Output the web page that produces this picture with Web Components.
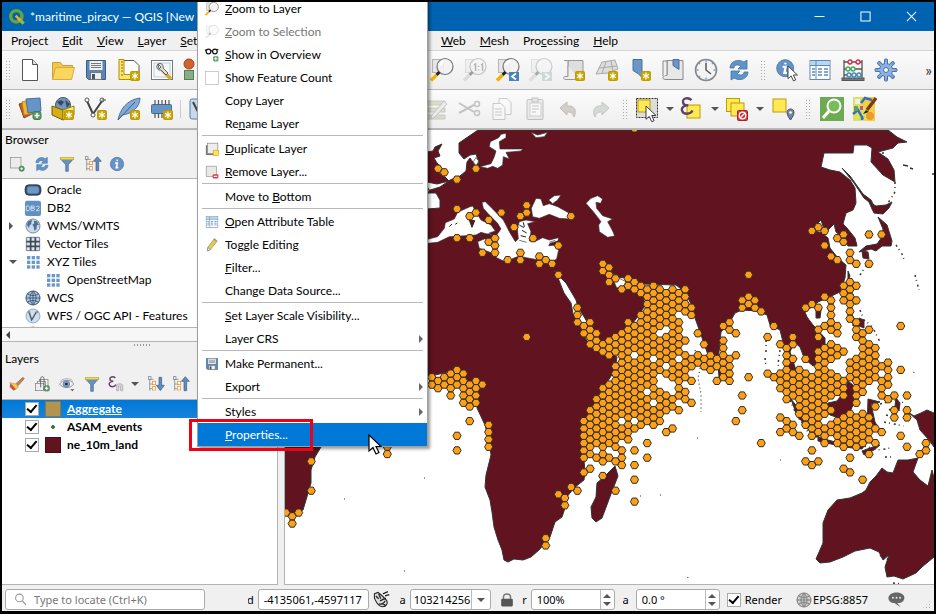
<!DOCTYPE html>
<html lang="en">
<head>
<meta charset="utf-8">
<title>maritime_piracy — QGIS</title>
<style>
html,body{height:100%;margin:0;background:#000}
body{font:12px/18px Lato,"Open Sans",sans-serif;color:#000}
</style>
</head>
<body>
<qgis-window></qgis-window>
<script>
const rect=(x,y,w,h,f,s='none',r=0)=>`<rect x="${x}" y="${y}" width="${w}" height="${h}" rx="${r}" fill="${f}" stroke="${s}"/>`;
const path=(d,f='none',s='none',w=1,x='')=>`<path d="${d}" fill="${f}" stroke="${s}" stroke-width="${w}" ${x}/>`;
const circ=(x,y,r,f='none',s='none',w=1)=>`<circle cx="${x}" cy="${y}" r="${r}" fill="${f}" stroke="${s}" stroke-width="${w}"/>`;
const star=rect(13.5,13.5,9,9,'#c9a500','#c09a00',1)+path('M18 14.5v7M15 16.2l6 3.6M15 19.8l6-3.6','none','#fff',1.2);
const plusBadge=rect(15,14.5,8,8,'#5b9a68','#3f7f50',2)+path('M19 16v5M16.500 18.500h5','none','#fff',1.500);
const lens=(handle='#f0b400')=>rect(2.500,1.500,11,13,'#e6e6e6','#b5b5b5')+circ(15,8.500,8,'#f2f2f2dd','#777',1.200)+path('M10 7a5 5 0 0 1 4-3.500','none','#fff',1.800)+path('M9.500 14L6.500 17','none','#222',3)+path('M6.500 17L1 22.500','none',handle,3.400);
const globe=(f,l)=>circ(12,12,10.500,f,l,1.500)+path('M2 12h20M12 2v20M12 2c-6 5-6 15 0 20M12 2c6 5 6 15 0 20M4 6c5 3 11 3 16 0M4 18c5-3 11-3 16 0','none',l,1.300);
const land=path('M4 6c3-3 6-3 7-2l-2 3 1 2-3 2-1 4-3-4zM13 4l5 1 3 5-3 1-1 6-3 2-1-6-2-3 3-2z','#54708c');
const floppy=path('M2.500 2.500h19v19H4.500l-2-2z','#5b87b8','#3c5d82')+rect(5.5,3,13,9,'#f0f0f0')+path('M7 5.500h10M7 7.500h10M7 9.500h10','none','#777')+rect(6.5,14.5,11,7,'#eee','#777')+rect(8,16,3,5,'#456');
const refresh=path('M3 10C3 4 10 0 17 4l3-2v9h-9l3-3C10 6 7 7 7 10z','#5e93cb','#44739f',.8)+path('M21 14c0 6-7 10-14 6l-3 2v-9h9l-3 3c4 2 7 1 7-2z','#5e93cb','#44739f',.8);
const funnel=path('M2 4h20l-8 9v10h-4V13z','#6592c4','#48678c')+rect(2,2,20,3.500,'#f0dc4b','#b9a94a');
const info=circ(12,12,10,'#6693c5','#4a739f')+path('M12.500 5.500l-.5 2M9 10.500h3.500L11 17.500h3','none','#fff',2.500);
const pointer=path('M0 0v14l3.500-3 2.500 5.500 2.500-1-2.500-5.500h4.500z','#fff','#333',1);
const yellow=(x,y,s)=>rect(x,y,s,s,'#ffe955','#c09a00');
const tree=path('M4 2v20M4 5h6M4 12h6M4 19h6','none','#777')+rect(2,1,4,4,'#eee','#777')+rect(8,8,5,5,'#fff','#e58a1f')+rect(8,16,5,5,'#fff','#e58a1f');
const eps=(x,y,s)=>`<g transform="translate(${x} ${y}) scale(${s})">`+path('M10 2C7-1 1 0 2 4c0 2 2 3 5 3C3 7 0 9 1 12c1 4 8 4 10 0','none','#634068',2.2)+'</g>';
const dots=(c,z=5)=>[3,10,17].map(x=>[3,10,17].map(y=>rect(x,y,z,z,c)).join('')).join('');
const page=path('M4.500 1.500h10l5 5v16h-15z','#fff','#555')+path('M14.500 1.500v5h5','#ddd','#555');
const ICONS={
 qgis:circ(11,11,8.500,'none','#67a637',5)+path('M14 14l8 8','none','#8fbd3d',5)+path('M10 10l7 7','none','#f0a830',3.500),
 new:page,
 open:path('M1.500 21.500V4.500h8l2 3h10v4','#f3c74a','#c79f35')+path('M1.500 21.500l3-12h19l-3 12z','#fbd65f','#d7ab3c'),
 save:floppy,
 layout:path('M5 2.500h12l5 5v14H5z','#fff','#555')+path('M2 1.500h5v15h7v5H2z','#ffe46a','#b28e00')+path('M4 4h2M4 7h2M4 10h2M4 13h2M4 17h2','none','#8a6d00')+star,
 tools:rect(1.5,2.500,21,19,'#fff','#777')+rect(4,5,16,14,'#f6f8fc','#bbccdd')+path('M12 12L21 21','none','#d9a92b',3.500)+path('M8 6c-3 3 0 7 3 6l5 5 2-2-5-5c1-3-2-6-5-4l3 3-2 2z','#ddd','#555',.9),
 style:circ(6,6,5,'#d2622c','#a04218')+rect(1.500,12.500,9,9,'#89ad89','#50805a')+path('M15 7l6 3','none','#48739f',2),
 zoomLayer:lens(),
 zoomSel:`<g opacity=".3">${lens('#bbb')}</g>`,
 zoom11:`<g opacity=".4">${lens('#bbb')}${path('M11 7l1.500-1v7M18 7l1.500-1v7M15.500 8v1M15.500 11.500v1','none','#555',1.500)}</g>`,
 zoomLast:lens()+rect(13,14,10,9,'#4c82ba')+path('M20 15.500l-4 3 4 3','none','#fff',1.800),
 zoomNext:`<g opacity=".35">${lens('#bbb')}${rect(13,14,10,9,'#8aa')}${path('M16 15.500l4 3-4 3','none','#fff',1.800)}</g>`,
 mapNew:path('M6 2.500h15v16H6z','#dedede','#999')+path('M2 2.500h4v16H3c-2 0-2 3 1 3h13','#eee','#999')+star,
 mesh:path('M1 16L7 4l13-2 3 9-10 4z','#ddd','#aaa')+path('M4 10l18-2M11 4l-4 11M16 3l2 10','none','#aaa')+star,
 bookNew:path('M5 1.500h9v18l-4-4-5-3z','#6b97c8','#48709c')+star,
 book:path('M6 2.500h16v19H5c-4 0-4-3-1-4h2z','#e8e8e8','#888')+path('M2 18V3h4v14','#f0f0f0','#888')+path('M12 1.500h6v10l-3-2-3-2z','#6b97c8','#48709c'),
 clock:circ(12,12,10.500,'#f4f4f4','#888',1.600)+path('M12 5v7l5 4','none','#555',1.500)+path('M12 2.500v2M12 19.500v2M2.500 12h2M19.500 12h2M5 5l1 1M18 5l1 1M5 19l1-1','none','#6b97c8',1.300),
 refresh,
 identify:`<g transform="scale(.85)">${info}</g><g transform="translate(13 8) scale(.9)">${pointer}</g>`,
 table:rect(2,2.500,20,19,'#fff','#5d88b8')+rect(2.500,3,19,4,'#b9d8f0')+path('M2 7.500h20M8 3v18','none','#5d88b8')+path('M4 11h3M4 14h3M4 17h3M10 11h4M10 14h4M10 17h4M16 11h4M16 14h4M16 17h4','none','#5d88b8',1.400),
 abacus:path('M3 2v19M21 2v19M3 4h18M3 11h18M3 17h18','none','#555',1.300)+rect(1,20,22,2.500,'#777','#555')+circ(9,4,2,'#fff','#d24',1.300)+circ(17,4,2,'#fff','#d24',1.300)+circ(7,11,2,'#dfd','#4a5',1.300)+circ(12,11,2,'#dfd','#4a5',1.300)+circ(8,17,2,'#def','#48b',1.300)+circ(13,17,2,'#def','#48b',1.300)+circ(18,17,2,'#def','#48b',1.300),
 gear:[0,45,90,135].map(a=>`<rect x="10.500" y="1" width="3" height="22" rx="1" fill="#7ea6d8" stroke="#4773ab" transform="rotate(${a} 12 12)"/>`).join('')+circ(12,12,6.500,'#8fb2de','#4773ab')+[0,45,90,135].map(a=>`<rect x="11" y="4" width="2" height="16" fill="#8fb2de" transform="rotate(${a} 12 12)"/>`).join('')+circ(12,12,2.500,'#f5f5f5','#4773ab'),
 dataSource:path('M1 7l12-3 3 12-10 5z','#c85a28','#9a3d15')+path('M4 5l12-3 2 14-12 2z','#eeb530','#ba8614')+path('M8 2l14-1 1 13-13 2z','#6694c6','#486f9c')+plusBadge,
 geopackage:circ(12,8,7.500,'#7195bb','#456')+path('M6 5l4-2 3 2-3 4zM14 3l5 4-3 4z','#33495f')+path('M1 9l11 4v10L1 18z','#d7ad18','#775d00')+path('M12 13l11-4v9l-11 5z','#ffef5d','#927a10')+star,
 vector:path('M3 4l6 13L18 4','none','#444',2)+circ(3,3,2,'#fff','#555')+circ(9,18,2,'#fff','#555')+path('M18 3h4M16 3a2 2 0 1 0 4 0 2 2 0 0 0-4 0','none','#555')+star,
 feather:path('M1 23C3 13 9 3 23 1c0 9-8 16-18 17z','#83aad6','#4d7196')+path('M1 23L18 5','none','#3c6086')+star,
 chip:rect(1.500,7.500,20,9,'#6794c7','#48709c',1)+path('M5 3v5M8.500 3v5M12 3v5M15.500 3v5M19 3v5M5 16v5M8.500 16v5M12 16v5M15.500 16v5','none','#555',1.200)+star,
 virtual:rect(2,2,20,20,'#c9d9ea','#5580ae',2)+path('M5 5l6 12 7-12','none','#345',2),
 edits:`<g opacity=".45">${path('M1 4h20v4H1zM1 11h20v4H1zM1 18h20v4H1z','#b9c38c','#999')}${path('M8 18L20 4l3 3L11 20l-4 2z','#ddd','#888')}</g>`,
 cut:path('M2 6l15 9M2 16L17 8','none','#c4c4c4',2)+circ(20,7,2.500,'none','#c4c4c4',1.500)+circ(20,16,2.500,'none','#c4c4c4',1.500),
 copy:`<g opacity=".35">${path('M9 1.500h8l4 4v12H9z','#fff','#777')}${path('M3 6.500h8l4 4v12H3z','#fff','#777')}${path('M5 12h7M5 15h7M5 18h7','none','#777')}</g>`,
 paste:`<g opacity=".4">${rect(4,2.500,16,20,'#ddd','#777',1)}${rect(7,6,11,13,'#fff','#999')}${rect(9,1,6,4,'#ccc','#777')}${path('M9 9h7M9 12h7M9 15h4','none','#777')}</g>`,
 undo:path('M4 11l7-6v4c8-1 10 5 7 11-1-4-3-5-7-5v3z','#d4cdc8','#c2bcb8'),
 redo:path('M20 11l-7-6v4C5 8 3 14 6 20c1-4 3-5 7-5v3z','#d6dad6','#c2c6c2'),
 select:`<rect x="1.500" y="1.500" width="21" height="19" fill="#ddd" stroke="#333" stroke-dasharray="2 1"/>`+yellow(3,3,12)+`<g transform="translate(11 9) scale(.95)">${pointer}</g>`,
 selExpr:yellow(7,8,13)+eps(1,1,1.050),
 deselect:yellow(1.500,1.500,13)+yellow(6,6,13)+rect(12.500,13.500,10,10,'#d8353c','#b02028',1)+circ(17.500,18.500,3.300,'none','#fff',1.300)+path('M15 21l5-5','none','#fff',1.300),
 selLoc:yellow(1,2,13)+path('M18.500 23c-6-8-3-11 0-11s6 3 0 11z','#6d8ba0','#547')+circ(18.500,15.500,1.300,'#fff'),
 osmFind:rect(0,0,24,24,'#6cab4f')+circ(14,9,6.500,'#78bd5a','#fff',2)+path('M9 14l-6 7','none','#fff',3),
 osmEdit:rect(0,0,22,24,'#f4cf45')+path('M0 0h9v8l5 5v11H0z','#dfe05e')+path('M0 17l5-4 5 9M8 6l4-5 7 2M9 23v-4','none','#3671bf',2.500)+rect(1,9,4,5,'#67a35d')+rect(7,9,3,4,'#c45c6b')+rect(2,2,5,5,'#e8f0f5')+path('M14 13L23 1','none','#7c3c16',3.500)+path('M10 17l3-4 3 2z','#222')+circ(17,19,4,'#f09a2c'),
 addLayer:rect(2,2,16,16,'#ececec','#888')+circ(19,19,4,'#5b9a68','#3f7f50')+path('M19 17v4M17 19h4','none','#fff',1.200),
 filter:funnel,
 collapse:tree+path('M18 22V8h-4l6-7 6 7h-4v14z','#5d8cbf','#3d5c80'),
 expand:tree+path('M18 2v12h-4l6 8 6-8h-4V2z','#5d8cbf','#3d5c80'),
 info,
 oracle:rect(0,4,24,16,'#34495e','#2b3c4d',6)+rect(3,6.500,18,11,'#6c98c8','#54779f',4),
 db2:rect(0,1,24,23,'#6390c2','none',3)+`<g stroke="#d8e6f4" fill="none" stroke-width="1.300"><path d="M2 9h3c3 0 3 7 0 7H2zM9 9h3c3 0 3 3 0 3H9zM9 12h3c3 0 3 4 0 4H9zM17 10c2-2 6 0 4 2l-4 4h5"/></g>`,
 wms:circ(12,12,10.500,'#c9dcef','#607e9b',1.300)+land,
 vtiles:rect(2,2,20,20,'#dde3ea','#3c4a58',1)+path('M2 8.500h20M2 15.500h20M8.500 2v20M15.500 2v20','none','#3c4a58',2.500),
 xyz:dots('#6b97c8'),
 wcs:globe('#a9c7e4','#3b526b'),
 wfs:circ(12,12,10.500,'#cfdeed','#6b8cab')+path('M6 6l4 12 7-12','none','#456',2)+circ(6,6,1.500,'#fff','#456')+circ(18,6,1.500,'#fff','#456'),
 brush:path('M10 12l3 3L23 4l-2-2z','#c98a3c','#855')+path('M1 10l10 2 3 5-5 4z','#f1cd42','#b97')+path('M2 11l8 8-3 3-6-6z','#d24e43'),
 group:rect(8,5,13,13,'#f4f4f4','#777')+rect(5,8,12,12,'#f4f4f4','#777')+rect(2,11,12,11,'#eee','#777')+path('M10 17V4c0-4 5-4 5 0v10','none','#555',1.300)+plusBadge,
 eye:path('M1 12C5 5 18 4 22 12c-4 7-17 7-21 0z','#f4f4f4','#888',1.300)+circ(11,12,5,'#7ba2cf','#53779f')+circ(11,12,2,'#222')+path('M2 8c4-5 14-6 19 0','none','#999')+path('M17 20h6l-3 3z','#555'),
 epsF:eps(1,1,1)+path('M13 22v-8c0-3 9-3 9 0v8h-3v-7h-3v7z','#ddd','#999'),
 overview:circ(6,6,4,'none','#111',2)+circ(17,6,4,'none','#111',2)+path('M0 4l3-1M20 3l3 0M10 5h3','none','#111',2)+rect(14,14,9,9,'#5b9a68','none',2)+path('M18.500 15.500v6M15.500 18.500h6','none','#fff',1.500),
 box:rect(1,1,22,22,'#fff','#aaa'),
 dup:rect(1.500,5.500,17,17,'#777')+rect(4,2,18,18,'#eee','#777')+rect(14,14,9,9,'#ffe25a','#c7a000'),
 remove:rect(2,2,18,18,'#e9e9e6','#888')+rect(13,16,10,7,'#e33b43','none',2)+path('M15 19.500h6','none','#fff',2),
 pencil:path('M4 22l1-6L16 1l5 4L9 20z','#e4cf3e','#777')+path('M4 22l1-6 4 4z','#eee','#777')+path('M15 2l5 4','none','#999',2),
 search:circ(10,9,7,'none','#999',2)+path('M15 14l7 8','none','#999',2.500),
 mouse:path('M2 4l5-2 5 4 6 6c5 5 0 11-6 10S4 14 2 10z','#ddd','#222',1.500)+path('M4 7l4 4M8 4l3 7M10 14l8-4M8 18c4 2 8-1 9-4M14 18l4 3M14 4l7-3M17 7l6-2','none','#222',1.800),
 lock:path('M6 11V7c0-7 12-7 12 0v4','none','#777',2.500)+rect(2,10,20,13,'#555','none',2),
 globe:globe('#ccc','#777'),
 message:path('M12 2c15 0 14 15 2 15h-1l5 6-9-6C-3 16-2 2 12 2z','#666')+circ(7,9.500,1.300,'#eee')+circ(12,9.500,1.300,'#eee')+circ(17,9.500,1.300,'#eee'),
 min:path('M1 12h22','none','#fff',2),max:path('M2 2h20v20H2z','none','#fff',2.200),close:path('M2 2l20 20M22 2L2 22','none','#fff',2.200)
};
function define(tag,css,html){
 customElements.define(tag,class extends HTMLElement{
  connectedCallback(){
   if(this.shadowRoot)return;
   const r=this.attachShadow({mode:'open'});
   r.innerHTML=`<style>:host,*{box-sizing:border-box}button,input,select{font:inherit;color:inherit}button{border:0;background:none;padding:0}${css}</style>`+(typeof html==='function'?html(this):html);
  }});
}
const A=(e,n,d='')=>e.getAttribute(n)??d;
const mn=s=>s.replace(/&(\w)/,'<u>$1</u>');

define('q-icon',':host{display:inline-block;width:24px;height:24px;flex:none}svg{display:block;width:100%;height:100%;overflow:visible}',
 e=>`<svg viewBox="0 0 24 24" aria-hidden="true">${ICONS[A(e,'name')]}</svg>`);
define('tool-button',`:host{display:block;flex:none;width:33px}:host([menu]){width:45px}:host([small]){width:25px}:host([small]) q-icon{width:16px;height:16px}:host([small][menu]){width:38px}
 button{display:flex;width:100%;align-items:center;justify-content:center;gap:7px}i{border:4px solid transparent;border-top-color:#555;border-bottom:0}`,
 e=>`<button aria-label="${A(e,'icon')}"><q-icon name="${A(e,'icon')}"></q-icon>${e.hasAttribute('menu')?'<i></i>':''}</button>`);
define('tool-grip',`:host{flex:none;width:15px;display:flex;justify-content:center}i{width:6px;height:21px;background:radial-gradient(circle,#aaa 0 1px,transparent 1px) 0 0/3px 3px}`,'<i></i>');
define('tool-bar',`:host{display:flex;align-items:center;height:39px;flex:none;background:linear-gradient(#fbfbfb,#eee);border-bottom:1px solid #b9b9b9}`,'<slot></slot>');

define('title-bar',`:host{display:flex;align-items:center;height:29px;flex:none;background:#0063b1;color:#fff;padding-left:7px}
 h1{font:inherit;margin:0 0 0 5px;flex:1;white-space:nowrap}q-icon{width:16px;height:16px}button{width:46px;height:29px;display:grid;place-items:center}button q-icon{width:11px;height:11px}`,
 `<q-icon name="qgis"></q-icon><h1>*maritime_piracy — QGIS [New</h1>${['min','max','close'].map(n=>`<button aria-label="${n}"><q-icon name="${n}"></q-icon></button>`).join('')}`);
define('menu-bar',`:host{display:flex;height:20px;flex:none;background:#f0f0f0;border-bottom:1px solid #d5d5d5;padding-left:2px}
 button{padding:0 7px;line-height:19px}nav{display:flex}.first{width:430px}`,
 `<nav class="first">${['Pro&ject','&Edit','&View','&Layer','&Sett'].map(t=>`<button>${mn(t)}</button>`).join('')}</nav><nav>${['&Web','&Mesh','Pro&cessing','&Help'].map(t=>`<button>${mn(t)}</button>`).join('')}</nav>`);

define('dock-title',':host{display:block;padding:0 3px;line-height:20px;flex:none}','<slot></slot>');
define('dock-tools',':host{display:flex;align-items:center;height:28px;flex:none;padding:0 0 1px 2px}:host([tall]){height:30px}','<slot></slot>');
define('tree-item',`:host{display:flex;align-items:center;height:18px;flex:none;white-space:nowrap}
 .tw{width:23px;flex:none;padding-left:7px}.tw i{display:block;width:0;border:4px solid transparent}.right i{border-left-color:#555;border-right:0}.down i{border-top-color:#555;border-bottom:0}
 q-icon{width:16px;height:16px;margin-right:6px}:host([child]) q-icon{margin-left:20px}`,
 e=>`<span class="tw ${A(e,'fold')}">${e.hasAttribute('fold')?'<i></i>':''}</span><q-icon name="${A(e,'icon')}"></q-icon><slot></slot>`);
const check=`input[type=checkbox]{appearance:none;margin:0;width:14px;height:14px;background:#fff;border:1px solid #aaa;flex:none;display:grid;place-items:center}input[type=checkbox]:checked::after{content:"";width:4px;height:8px;border:solid #000;border-width:0 2px 2px 0;transform:rotate(40deg) translate(-1px,-1px)}`;
define('layer-item',`:host{display:block;flex:none}label{display:flex;height:18px;align-items:center;padding-left:23px;font-weight:700}
 :host([selected]) label{background:linear-gradient(#0078d7,#1683dd);color:#fff;text-decoration:underline}${check}
 .s{width:16px;height:16px;margin:0 6px;background:var(--c);flex:none;border:1px solid #0003}:host([dot]) .s{border:0;background:radial-gradient(circle,#3d7a45 0 2px,transparent 2px)}`,
 e=>`<label><input type="checkbox" checked><span class="s" style="--c:${A(e,'color')}"></span><slot></slot></label>`);
define('side-dock',`:host{display:flex;flex-direction:column;background:#f0f0f0;min-height:0;padding-right:6px}
 .box{background:#fff;border:solid #b3b3b3;border-width:1px 1px 1px 0;overflow:hidden}.browser{height:150px;padding-top:2px;flex:none}.layers{flex:1;min-height:0}
 .scroll{height:14px;flex:none;background:#f7f7f7;border:1px solid #b3b3b3;border-width:0 1px 1px 0;display:flex;align-items:center;padding-left:4px}
 .scroll button{border:4px solid transparent;border-right-color:#444;border-left:0;height:8px}.split{height:7px;flex:none;width:17px;margin-left:131px;background:radial-gradient(circle,#999 0 1px,transparent 1px) 0 1px/3px 4px repeat-x}`,
 `<dock-title>Browser</dock-title><dock-tools>${['addLayer','refresh','filter','collapse','info'].map(n=>`<tool-button small icon="${n}"></tool-button>`).join('')}</dock-tools>
 <div class="box browser"><tree-item icon="oracle">Oracle</tree-item><tree-item icon="db2">DB2</tree-item><tree-item icon="wms" fold="right">WMS/WMTS</tree-item><tree-item icon="vtiles">Vector Tiles</tree-item><tree-item icon="xyz" fold="down">XYZ Tiles</tree-item><tree-item icon="xyz" child>OpenStreetMap</tree-item><tree-item icon="wcs">WCS</tree-item><tree-item icon="wfs">WFS / OGC API - Features</tree-item><tree-item icon="wms"></tree-item></div>
 <div class="scroll"><button aria-label="Scroll left"></button></div><div class="split"></div>
 <dock-title>Layers</dock-title><dock-tools tall>${['brush','group','eye','filter'].map(n=>`<tool-button small icon="${n}"></tool-button>`).join('')}<tool-button small menu icon="epsF"></tool-button><tool-button small icon="expand"></tool-button><tool-button small icon="collapse"></tool-button></dock-tools>
 <div class="box layers"><layer-item selected color="#b39350">Aggregate</layer-item><layer-item dot>ASAM_events</layer-item><layer-item color="#61131f">ne_10m_land</layer-item></div>`);

/* Occupied cells of the hexagonal grid, as column: rows. */
const CELLS=`-24:47|-23:47,48|-22:47|-20:40,44|-8:38,39|-2:3|-1:28,29|0:0,29,30|1:0,28,29|2:28-31|3:1,5,9,27-29,36,38|4:28-32|5:6,9,29-32,34|6:0,6,29-32|7:11,29|8:7,10,35-38|9:9-11|10:6|11:12|12:8|13:6,11,12|14:5,6,23|15:9|16:12,13|17:12,50,51|18:13|19:10,14,44|20:45,46|21:6,43|22:19-21,44|23:21,22,34-39,41|24:21-24,33-39,41|25:22-24,31-37,39|26:13,14,24,25,30-40,42|27:13-15,23-25,29-37,39|28:15,23-25,27-38,40,44|29:16,22-33,35,36,38-40|30:15,16,21-37|31:15,16,21-24,26-33,35,38,40,42,45|32:16,17,20-35|33:16-29,31-34,37,39|34:16-25,27-31,33-35|35:16-21,23-27,30-34|36:17-21,23-26,28,31-33,36|37:16-28,31,32,35|38:17-19,21-25,27-31,33|39:16-19,23,25-28,30,31|40:19,20,26,27,29,32|41:22,25,26|42:24,26,27|43:25-27|44:26,27,29|45:21,23-28|46:21,22,26-29|47:22,25,34|48:18,19,31,33|49:14,17,18,28|50:18,19|51:19,37|52:23,28|53:21,28|54:24,28-30,34,36|55:24-31,34,35|56:23,24,26,28-31,35,36|57:27-33,36|58:19,26,28-35,40|59:8,18,28-36,38,40|60:8,19,22,23,25-36,40|61:8,10,17,21,24-33,35-37|62:12,18-22,24-26,28-31,33,35,36|63:9,12,21,22,24,25,28-30,34-37|64:9,10,16-18,25,29-31,34-38,41|65:11,12,15-20,26-28,33-37,39,41|66:13,16,18,21-23,26-32,34-38|67:22-30,33-37,42|68:9,13,22,24-29,34-37,39|69:24-28,32,35,37|70:9,27,29-31,36|71:26-29,31|72:31,33,34|73:21,27,36|74:31,33,34,38|76:39|77:37,38|31:-6`;
const hexes=()=>{let d='';CELLS.split('|').forEach(c=>{const [k,rows]=c.split(':');rows.split(',').forEach(r=>{
  const m=r.match(/^(-?\d+)(?:-(\d+))?$/),a=+m[1],b=+(m[2]??m[1]);
  for(let n=a;n<=b;n++){const x=438+6.338*k,y=168.67+7.318*n+(k%2?3.66:0);
   d+=`M${(x-4.1).toFixed(1)} ${y.toFixed(1)}l2.050-3.600h4.100l2.050 3.600l-2.050 3.600h-4.100z`}})});return d};
const LAND=`M478 130L459 143L459 153L464 159L470 155L476 154L479 163L475 165L470 158L467 162L466 171L460 176L450 180L440 187L427 191L427 193L436 193L440 200L440 208L427 209V377L456 370L476 388L477 408L485 425L489 440L491 455L486 475L485 487L490 500L492 512L494 527L498 540L502 550L504 560L508 562L514 559L523 560L531 557L539 550L546 542L550 537L554 525L555 522L562 517L565 508L566 498L574 488L584 480L585 472L584 460L583 425L592 407L604 387L615 370L617 357L612 354L600 352L589 345L583 333L578 322L573 314L571 303L564 293L558 278L554 270L560 277L566 283L576 300L578 307L586 320L593 332L601 350L608 342L626 332L639 315L644 307L644 298L636 290L626 288L618 288L614 278L609 268L616 277L626 278L643 284L676 285L685 292L693 308L695 318L700 332L707 352L713 366L718 362L721 332L730 322L735 313L742 310L757 311L767 315L770 325L780 330L783 342L787 352L789 372L794 380L796 370L790 352L794 342L800 347L803 355L806 360L813 366L821 362L825 350L825 338L813 325L807 317L805 312L813 306L818 302L827 298L840 292L845 278L846 265L838 258L830 248L828 238L822 233L815 231L816 225L821 220L823 226L828 230L834 224L836 232L843 238L848 246L857 246L855 238L847 228L843 224L846 213L853 210L856 203L855 188L850 180L840 172L830 170L821 167L824 153L853 153L854 145L867 145L872 148L871 162L883 175L895 182L894 170L888 159L878 152L893 148L898 143L907 142L897 137L888 130Z
M427 152l6-1 2-4 7-3-4 7 2 5-6 2 3 5 4 4-2 6 6 4 4 4-12 3-10-2z
M842 168l8 8 13 18 8 6 3 6-10-8-10-15zM869 202l7 4 10-1 6-3-3 6-6 6-9-1-2-4zM878 217l9 8 5 16-1 5-9 0-6 5-5-2-8 2-4 1 7-6 11-2 5-7 1-8zM862 251l6 1 1 7-6-1z
M848 271l2 5-2 4zM859 318l5 2 0 8-5-2zM852 315l4 6-3 5zM816 310l5 0-1 8-4 0z
M791 399l8 10 10 14 10 14-4 0-10-11-9-13zM818 437l17 5 15 2 14 2-2 3-18-2-26-6zM828 403l9-2 7-9 4-11 5 4 1 18-5 11-10 4-9-3-4-5zM868 399l12 3-9 2 4 18 4 7-5 0-4-10-3 10zM862 451l8-3 10-3-6 5-10 5z
M908 412l6 4 7-3 6-3 7 3V447L929 440L920 430L917 420zM896 398l4 5-1 8-4-5z
M928 486L920 480L913 472L918 458L908 460L898 460L893 473L887 472L882 468L876 476L870 482L866 490L862 493L850 498L837 500L828 510L823 523L823 543L816 559L820 563L830 562L843 557L855 551L870 548L879 552L883 560L889 555L885 567L887 577L894 576L903 579L916 573L922 567L934 557V478L932 470z
M615 466l3 10-7 18-9 24-6 4-4-4-1-11 5-10 1-14 7-6zM285 447H321L315 457L311 470L311 483L306 500L303 510L293 513L285 511zM718 365l5 3 1 8-5 1z`;
/* Inland seas, traced at three times map scale. */
const SEA=`M5 355V343L35 335L55 310L58 293L85 282L95 262L130 246L140 243L150 262L165 285L195 300L208 318L190 324L200 332L165 322L150 330L120 332L70 335L35 352Z
M168 232L178 230L200 252L232 285L240 300L250 320L268 350L277 342L274 310L280 290L300 285L328 290L305 296L315 320L310 348L330 348L350 338L370 345L398 338L396 348L372 355L368 362L394 360L398 375L392 402L378 410L340 405L300 398L280 393L262 400L240 412L212 398L200 385L160 370L155 350L180 340L208 335L225 312L215 295L190 270L172 250Z
M316 250L330 220L345 222L352 242L370 236L395 245L425 262L440 275L430 282L400 280L370 268L340 280L320 275ZM368 225L385 212L405 210L395 225L380 236Z
M480 235L495 220L515 212L530 222L524 235L510 232L512 250L530 272L560 282L545 290L560 318L566 333L545 337L520 320L518 300L525 290L502 260Z
M162 125L195 116L205 95L210 78L190 65L193 50L218 38L225 28L240 25L240 38L220 50L222 72L290 72L285 78L240 82L250 102L232 95L230 120L215 130L200 124L185 130ZM315 22L335 30L365 22L355 35L330 38Z
M562 465L580 460L600 470L590 488L572 488ZM150 98L158 108L150 125L142 110Z`;
define('map-canvas',`:host{display:block;background:#fff;border:solid #b3b3b3;border-width:0 0 1px 1px;min-width:0;min-height:0;overflow:hidden}svg{display:block;width:100%;height:100%}`,
 ()=>`<svg viewBox="285 130 649 454" preserveAspectRatio="xMidYMid slice" role="img" aria-label="Map of piracy events">
 ${path(LAND,'#61131f','#333',1,'stroke-linejoin="round"')}
 <g transform="translate(426 125) scale(.3333)">${path(SEA,'#fff','#333',2)}${path('M70 305l8-8M88 298l6-4M280 300l14 8M288 316l14 8M284 332l16 4M292 292l3 14M130 285l8 22 8-20z','#61131f','#222',3)}${path('M160 332l30-6 8 8-12 12zM280 346l22 6M370 352l18-6','#61131f','#333',2)}</g>
 ${path('M766 340v14M765 358l1 8M850 290l4 6 2 10M860 310l4 10 8 6M874 330l6 12M886 415l10 2M889 410l14-8M860 275l9-14M896 245l6 9 3 8M915 275l4 15M780 350l-2 14 5 20 4 6M790 400l6 14 12 18M880 404l16-4M884 422l20 4M864 446l16 4 10-2M880 555l6 6 5-6M893 583l10 1M885 457h10M895 182l0 10-5 8-4 6','none','#333',1.500,'stroke-dasharray="2 3 1 4"')}
 ${path('M903 165l5 1M910 168l3 1M932 174h2M882 153h2','none','#333',1.500)}
 ${path('M701 364l-3 14 3 16 0 18M695 350l3 10M640 496h1M660 495h1M424 478h1M404 571h1M688 577l-1 4M780 460h1M697 438h1M914 372l-1 4M344 499h1','none','#333',1.200,'stroke-dasharray="1 3"')}
 ${path(hexes(),'#ff9e17','#33301f',1)}</svg>`);

define('context-menu',`:host{display:block;background:#fff;border:1px solid #a0a0a0;box-shadow:2px 2px 3px #0006}
 button{display:flex;width:100%;height:23px;align-items:center;text-align:left;padding:0 4px 0 7px;white-space:nowrap}
 .ic{width:20px;height:14px;flex:none}.ic q-icon{width:14px;height:14px;display:block}.t{flex:1}button i{border:4px solid transparent;border-left-color:#666;border-right:0}
 button:disabled{color:#777}.on{background:#0078d7;color:#fff}hr{border:0;height:1px;margin:0 4px 1px;background:#b8b8b8}`,
 ()=>[['&Zoom to Layer','zoomLayer'],['&Zoom to Selection','zoomSel','d'],['&Show in Overview','overview'],['Show Feature Count','box'],['Copy Layer'],['Re&name Layer'],0,['&Duplicate Layer','dup'],['&Remove Layer...','remove'],0,['Move to &Bottom'],0,['&Open Attribute Table','table'],['Toggle Editing','pencil'],['&Filter...'],['Change Data Source...'],0,['&Set Layer Scale Visibility...'],['Layer CRS','','m'],0,['Make Permanent...','save'],['Export','','m'],0,['Styles','','m'],['&Properties...','','on']]
 .map(r=>r?`<button class="${r[2]||''}" ${r[2]==='d'?'disabled':''}><span class="ic">${r[1]?`<q-icon name="${r[1]}"></q-icon>`:''}</span><span class="t">${mn(r[0])}</span>${r[2]==='m'?'<i></i>':''}</button>`:'<hr>').join(''));

define('spin-box',`:host{display:flex;width:84px;height:21px;border:1px solid #aaa;border-radius:3px;background:#fff;overflow:hidden;flex:none}input{border:0;flex:1;min-width:0;padding:0 0 0 5px;background:none}
 div{width:14px;border-left:1px solid #bbb;display:flex;flex-direction:column;justify-content:center;gap:4px;align-items:center}button{border:4px solid transparent;height:4px}.u{border-top:0;border-bottom-color:#555}.d{border-bottom:0;border-top-color:#555}`,
 e=>`<input type="text" value="${A(e,'value')}" aria-label="${A(e,'label')}"><div><button class="u" aria-label="Increase"></button><button class="d" aria-label="Decrease"></button></div>`);
define('status-bar',`:host{display:flex;align-items:center;height:26px;flex:none;background:#f0f0f0;padding:3px 3px 0;font:11px/16px "Noto Sans",sans-serif}
 .box{height:21px;border:1px solid #aaa;border-radius:3px;background:#fff}.find{display:flex;align-items:center;width:200px;padding-left:8px;gap:7px}.find q-icon{width:13px;height:13px}.find input{border:0;outline:0;min-width:0;flex:1;background:none;padding:0}input::placeholder{color:#777;opacity:1}
 .right{display:flex;align-items:center;margin-left:auto}.xy{width:111px;padding:0 0 0 5px}.cut{width:6px;overflow:hidden;direction:rtl;margin-right:4px}
 .m{width:17px;height:17px;margin:0 10px 0 4px}.sel{position:relative;display:flex}select{appearance:none;width:81px;padding:0 0 0 3px}.sel i{position:absolute;right:0;top:1px;width:20px;height:19px;border-left:1px solid #bbb;display:grid;place-items:center;pointer-events:none}.sel i::after{content:"";border:4px solid transparent;border-top-color:#555;border-bottom:0}
 .l{width:14px;height:16px;margin:0 7px 0 9px}.cut2{margin-left:8px;margin-right:7px}label{display:flex;align-items:center;gap:4px;margin-left:7px}${check}
 .crs{display:flex;align-items:center;gap:1px;margin-left:14px}.crs q-icon{width:16px;height:16px}.msg{margin-left:20px;height:17px}.msg q-icon{width:17px;height:17px}.grip{width:9px;height:9px;margin:10px 0 0 17px;background:radial-gradient(circle,#aaa 0 1px,transparent 1px) 0 0/3px 3px;clip-path:polygon(100% 0,100% 100%,0 100%)}`,
 `<label class="box find" style="margin:0"><q-icon name="search"></q-icon><input type="text" placeholder="Type to locate (Ctrl+K)" aria-label="Locate"></label>
 <div class="right"><span class="cut">d</span><input class="box xy" type="text" value="-4135061,-4597117" aria-label="Coordinate"><q-icon class="m" name="mouse"></q-icon><span class="cut">a</span>
 <div class="sel"><select class="box" aria-label="Scale"><option>103214256</option></select><i></i></div><q-icon class="l" name="lock"></q-icon><span class="cut">r</span><spin-box value="100%" label="Magnifier"></spin-box><span class="cut cut2">a</span><spin-box value="0.0 °" label="Rotation"></spin-box>
 <label><input type="checkbox" checked>Render</label><button class="crs"><q-icon name="globe"></q-icon>EPSG:8857</button><button class="msg" aria-label="Messages"><q-icon name="message"></q-icon></button><span class="grip"></span></div>`);

const tb=(l,x='')=>l.map(n=>`<tool-button ${x} icon="${n}"></tool-button>`).join('');
define('qgis-window',`:host{display:flex;flex-direction:column;height:100vh;border:2px solid #000;border-bottom-width:3px;position:relative;overflow:hidden;background:#f0f0f0}
 main{flex:1;min-height:0;display:grid;grid-template-columns:282px minmax(0,1fr);border-top:1px solid #b3b3b3}
 .gap1{width:214px;flex:none}.gap2{width:203px;flex:none}.sep{width:1px;height:18px;margin:0 2px;background:#ccc;flex:none}tool-grip.first{width:11px}
 .more{margin-left:auto;font-size:16px;color:#333;padding-right:2px}
 context-menu{position:absolute;left:195px;top:-6px;width:231px}.mark{position:absolute;left:187px;top:417px;width:124px;height:32px;border:3px solid #f00014}
 .cursor{position:absolute;left:366px;top:432px;width:14px;height:22px}`,
 `<title-bar></title-bar><menu-bar></menu-bar>
 <tool-bar><tool-grip class="first"></tool-grip>${tb(['new','open','save','layout','tools','style'])}<span class="gap1"></span>${tb(['zoomLayer','zoom11','zoomLast','zoomNext','mapNew','mesh','bookNew','book','clock','refresh'])}<tool-grip></tool-grip>${tb(['identify','table','abacus','gear'])}<button class="more" aria-label="More tools">»</button></tool-bar>
 <tool-bar><tool-grip class="first"></tool-grip>${tb(['dataSource','geopackage','vector','feather','chip'])}<span class="sep"></span>${tb(['virtual'])}<span class="gap2"></span>${tb(['edits','cut','copy','paste','undo','redo'])}<tool-grip></tool-grip>${tb(['select','selExpr','deselect'],'menu')}${tb(['selLoc'])}<tool-grip></tool-grip>${tb(['osmFind','osmEdit'])}</tool-bar>
 <main><side-dock></side-dock><map-canvas></map-canvas></main><status-bar></status-bar>
 <context-menu></context-menu><div class="mark"></div><svg class="cursor" viewBox="0 0 14 22">${path('M1 1v16l4-3.500 3 6.500 3-1.500-3-6h5z','#fff','#000',1.200)}</svg>`);
</script>
</body>
</html>
